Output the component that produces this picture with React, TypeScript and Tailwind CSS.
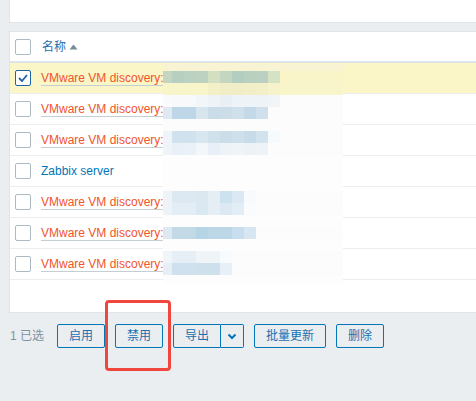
import React from 'react';

const FONT = { fontFamily: "'Liberation Sans', 'Noto Sans CJK SC', Arial, sans-serif" };

// blurred host names (mosaic overlay): [height, background, cells]
const mosaic: [number, string, string[]][] = [
  [7, '#f7f3d3', []],
  [12, '#f9f5c9', ['#c3d6c2', '#b6cfc0', '#bbd1c1', '#bdd2c1', '#d3dfc1', '#c2d6c0', '#b3cec0', '#b9d0c0', '#bcd0c1', '#d5e2c3']],
  [12, '#f9f5ca', ['#f9f5ca', '#f9f5ca', '#f9f5ca', '#f9f5ca', '#f3efc7', '#f1edc6', '#f1edc6', '#f2eec7', '#f3efc8', '#f6f2ca']],
  [12, '#fcfcfc', ['#fafbfc', '#f7f9fb', '#f7f9fb', '#f2f6f9', '#eef3f7', '#e9f0f5', '#eef3f7', '#eef3f7', '#eef3f7', '#f1f5f8']],
  [12, '#fcfcfc', ['#dfe9f1', '#bdd7e8', '#bdd7e8', '#d6e5ee', '#c9dce8', '#cbdde9', '#cfe0eb', '#c4d9e8', '#cfe0ec']],
  [12, '#fcfcfc', []],
  [12, '#fcfcfc', ['#eef4f8', '#cfe2ee', '#cfe2ee', '#d7e6ef', '#d0e1eb', '#cbdde9', '#cfe0eb', '#c8dbe8', '#d3e3ee', '#f5fafd']],
  [12, '#fcfcfc', ['#eef4f9', '#e9f0f7', '#eaf1f7', '#f3f7fa', '#e8eff6', '#eef3f7', '#f0f4f8', '#ecf2f6', '#eef3f7']],
  [12, '#fdfdfd', []],
  [12, '#fdfdfd', []],
  [12, '#fdfdfd', []],
  [12, '#fcfcfc', ['#eef3f8', '#dde9f2', '#dde9f2', '#dce8f0', '#e6eef5', '#cce2ef', '#dce9f3', '#f8fbfd']],
  [12, '#fcfcfc', ['#eef3f8', '#e3edf5', '#e3edf5', '#dae8f1', '#e6eef5', '#dce9f2', '#e3edf5', '#f9fbfd']],
  [12, '#fdfdfd', []],
  [12, '#fcfcfc', ['#dde9f1', '#c2d9e6', '#c2d9e6', '#b5d4e6', '#bcd7e8', '#bcd7e8', '#c8dded', '#d7e6f1']],
  [12, '#fdfdfd', []],
  [12, '#fcfcfc', ['#f0f5f9', '#e6eef6', '#e6eef6', '#eff4f9', '#eff4f9', '#f8fbfd']],
  [12, '#fcfcfc', ['#e6eff6', '#cfe1ee', '#cfe1ee', '#cfe0ed', '#cfe0ed', '#e8f0f7']],
  [8, '#fdfdfd', []],
];

const rows = [
  { name: 'VMware VM discovery:', template: true, checked: true },
  { name: 'VMware VM discovery:', template: true },
  { name: 'VMware VM discovery:', template: true },
  { name: 'Zabbix server', template: false },
  { name: 'VMware VM discovery:', template: true },
  { name: 'VMware VM discovery:', template: true },
  { name: 'VMware VM discovery:', template: true },
];

const Checkbox = ({ checked }: { checked?: boolean }) => (
  <span
    className={`w-4 h-4 shrink-0 rounded-[2px] bg-white border flex items-center justify-center ${
      checked ? 'border-[#1f65a6]' : 'border-[#acbbc2]'
    }`}
  >
    {checked && (
      <svg width="10" height="8" viewBox="0 0 10 8">
        <path d="M1 4l3 3 5-6" fill="none" stroke="#1f65a6" strokeWidth="1.8" />
      </svg>
    )}
  </span>
);

const Btn = ({ children, className = '' }: { children: React.ReactNode; className?: string }) => (
  <button
    className={`h-6 px-0 flex items-center justify-center whitespace-nowrap border border-[#0275b8] rounded-[2px] text-[#1a6fb0] text-[12px] leading-none ${className}`}
  >
    {children}
  </button>
);

export default function App() {
  return (
    <div className="relative w-[476px] h-[401px] overflow-hidden bg-[#ebeef0] pl-[9px] text-[12px]" style={FONT}>
      {/* top filter panel */}
      <div className="h-[23px] bg-white border-l border-b border-[#dfe4e7]" />

      {/* host table */}
      <div className="mt-[8px] bg-white border border-r-0 border-[#dfe4e7] pb-[32px]">
        <div className="h-[31px] flex items-center pl-[5px] gap-[10px] border-b-2 border-[#dde3e7]">
          <Checkbox />
          <span className="flex items-center gap-[3px] text-[#1f6fb0] ml-[1px]">
            名称
            <svg width="9" height="6" viewBox="0 0 9 6">
              <path d="M0.5 5.5L4.5 0.5L8.5 5.5Z" fill="#768d99" />
            </svg>
          </span>
        </div>
        {rows.map((r, i) => (
          <div
            key={i}
            className={`h-[31px] flex items-center pl-[5px] gap-[10px] border-b border-[#ebeef0] ${
              r.checked ? 'bg-[#fbf6c8]' : ''
            }`}
          >
            <Checkbox checked={r.checked} />
            {r.template ? (
              <span className="text-[#f0552b] border-b border-[#c5ced3] leading-[14px]">{r.name}</span>
            ) : (
              <span className="text-[#0275b8]">{r.name}</span>
            )}
          </div>
        ))}
      </div>

      {/* mass actions */}
      <div className="mt-[11px] flex items-center">
        <span className="text-[#7e939e] ml-[1px] mr-[13px]">1 已选</span>
        <div className="flex items-center gap-[10px]">
          <Btn className="w-12">启用</Btn>
          <Btn className="w-12">禁用</Btn>
          <div className="flex">
            <Btn className="w-[48px] rounded-r-none">导出</Btn>
            <button className="h-6 w-[23px] border border-l-0 border-[#0275b8] rounded-r-[2px] flex items-center justify-center">
              <svg width="10" height="7" viewBox="0 0 10 7">
                <path d="M1.5 1.5L5 5L8.5 1.5" fill="none" stroke="#0275b8" strokeWidth="2" />
              </svg>
            </button>
          </div>
          <Btn className="w-[72px]">批量更新</Btn>
          <Btn className="w-12">删除</Btn>
        </div>
      </div>

      {/* mosaic over host names */}
      <div className="absolute left-[163px] top-[64px] w-[180px] flex flex-col">
        {mosaic.map(([h, bg, cells], i) => (
          <div key={i} className="flex" style={{ height: h, background: bg }}>
            {cells.map((c, j) => (
              <div key={j} className={j === 0 ? 'w-[9px] h-full' : 'w-3 h-full'} style={{ background: c }} />
            ))}
          </div>
        ))}
      </div>

      {/* red annotation box */}
      <div className="absolute left-[105px] top-[300px] w-[66px] h-[71px] border-[3px] border-[#ef473d] rounded-[4px]" />
    </div>
  );
}
